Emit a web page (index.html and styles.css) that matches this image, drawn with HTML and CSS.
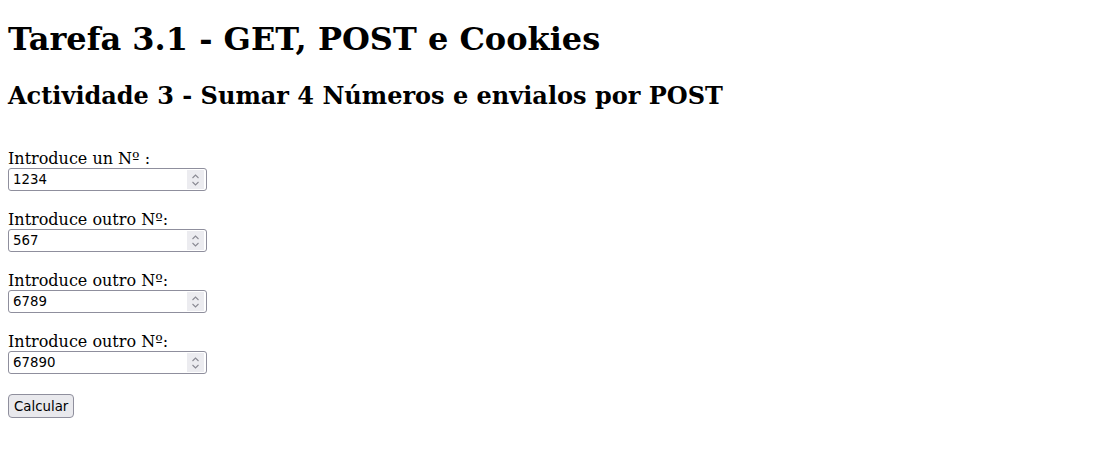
FILE: index.html
```html
<!DOCTYPE html>
<html lang="es">
<head>
<meta charset="utf-8">
<title>Tarefa 3.1</title>
<link rel="stylesheet" href="styles.css">
</head>
<body class="page">
<h1 class="title">Tarefa 3.1 - GET, POST e Cookies</h1>
<h2 class="subtitle">Actividade 3 - Sumar 4 Números e envialos por POST</h2>
<form class="sum-form" method="post">
  <div class="field">
    <label class="field-label" for="n1">Introduce un Nº :</label>
    <div class="num-box">
      <input class="num" type="number" id="n1" name="n1" value="1234">
      <span class="spin"><svg width="9" height="14" viewBox="0 0 9 14"><path d="M1.5 5 L4.5 2 L7.5 5 M1.5 9 L4.5 12 L7.5 9" fill="none" stroke="#8a8a93" stroke-width="1.1"/></svg></span>
    </div>
  </div>
  <div class="field">
    <label class="field-label" for="n2">Introduce outro Nº:</label>
    <div class="num-box">
      <input class="num" type="number" id="n2" name="n2" value="567">
      <span class="spin"><svg width="9" height="14" viewBox="0 0 9 14"><path d="M1.5 5 L4.5 2 L7.5 5 M1.5 9 L4.5 12 L7.5 9" fill="none" stroke="#8a8a93" stroke-width="1.1"/></svg></span>
    </div>
  </div>
  <div class="field">
    <label class="field-label" for="n3">Introduce outro Nº:</label>
    <div class="num-box">
      <input class="num" type="number" id="n3" name="n3" value="6789">
      <span class="spin"><svg width="9" height="14" viewBox="0 0 9 14"><path d="M1.5 5 L4.5 2 L7.5 5 M1.5 9 L4.5 12 L7.5 9" fill="none" stroke="#8a8a93" stroke-width="1.1"/></svg></span>
    </div>
  </div>
  <div class="field">
    <label class="field-label" for="n4">Introduce outro Nº:</label>
    <div class="num-box">
      <input class="num" type="number" id="n4" name="n4" value="67890">
      <span class="spin"><svg width="9" height="14" viewBox="0 0 9 14"><path d="M1.5 5 L4.5 2 L7.5 5 M1.5 9 L4.5 12 L7.5 9" fill="none" stroke="#8a8a93" stroke-width="1.1"/></svg></span>
    </div>
  </div>
  <div class="actions">
    <button class="btn" type="submit">Calcular</button>
  </div>
</form>
</body>
</html>
```
FILE: styles.css
```css
.page {
  font-family: "DejaVu Serif", serif;
  color: #000;
  background: #fff;
  margin: 0;
  padding: 0 8px;
}
.title {
  font-size: 32px;
  font-weight: bold;
  line-height: 38px;
  margin: 20px 0 0;
}
.subtitle {
  font-size: 24px;
  font-weight: bold;
  line-height: 28px;
  margin: 24px 0 0;
}
.sum-form {
  margin-top: 39px;
  display: flex;
  flex-direction: column;
  gap: 19px;
  align-items: flex-start;
}
.field {
  display: flex;
  flex-direction: column;
  align-items: flex-start;
}
.field-label {
  font-size: 16px;
  line-height: 18px;
  padding-top: 1px;
}
.num-box {
  box-sizing: border-box;
  width: 199px;
  height: 23px;
  border: 1px solid #8f8f9d;
  border-radius: 3px;
  background: #fff;
  display: flex;
  align-items: stretch;
}
.num {
  flex: 1;
  min-width: 0;
  border: none;
  outline: none;
  padding: 0 0 0 4px;
  margin: 0;
  font-family: "DejaVu Sans", sans-serif;
  font-size: 13.333px;
  color: #000;
  background: transparent;
  -moz-appearance: textfield;
  appearance: textfield;
}
.num::-webkit-inner-spin-button,
.num::-webkit-outer-spin-button {
  -webkit-appearance: none;
  margin: 0;
}
.spin {
  width: 17px;
  margin: 1px 2px 1px 0;
  background: #ececf0;
  display: flex;
  align-items: center;
  justify-content: center;
}
.spin svg {
  display: block;
}
.actions {
  margin-top: 1px;
}
.btn {
  box-sizing: border-box;
  height: 24px;
  padding: 0 5px;
  border: 1px solid #8f8f9d;
  border-radius: 4px;
  background: #e9e9ed;
  color: #000;
  font-family: "DejaVu Sans", sans-serif;
  font-size: 13.333px;
}
```
